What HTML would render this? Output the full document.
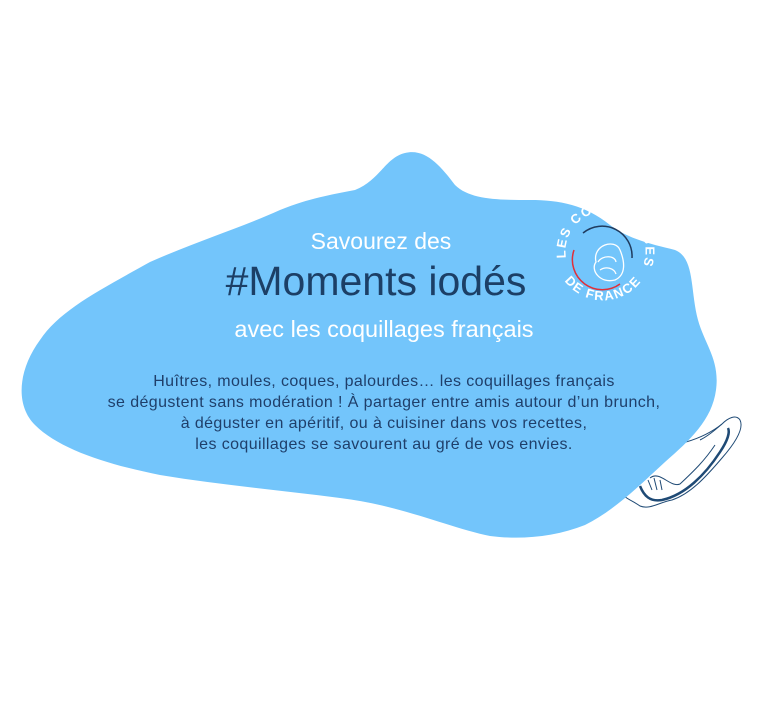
<!DOCTYPE html>
<html><head><meta charset="utf-8"><style>
html,body{margin:0;padding:0;background:#fff;width:768px;height:716px;overflow:hidden;font-family:"Liberation Sans",sans-serif}
.t{position:absolute;left:0;width:768px;text-align:center;white-space:nowrap}
</style></head><body>
<svg width="768" height="716" style="position:absolute;left:0;top:0">
<g fill="none" stroke="#1f4a75" stroke-width="1">
<path d="M618,488 C622,498 632,500 640,506 C650,510 660,502 672,500 C690,494 705,478 722,458 C736,442 744,428 740,420 C736,414 728,418 722,424 C712,432 700,438 686,442"/>
<path d="M640,486 C644,496 650,502 662,500 C685,495 705,475 720,452 C728,440 730,432 728,428" stroke-width="2.5"/>
<path d="M650,478 C660,470 670,488 680,484 C695,470 705,460 715,445"/>
<path d="M700,440 C708,436 715,430 722,424"/>
<path d="M648,480 l4,10 M654,478 l3,12 M660,480 l2,10"/>
</g>
<path fill="#73c5fb" d="M405,153 C425,148 440,165 455,185 C470,200 500,200 530,200 C560,200 585,205 610,225 C630,240 655,245 675,250 C695,258 690,290 698,320 C705,345 720,360 716,390 C712,420 690,440 665,462 C640,485 615,510 585,525 C555,537 520,540 490,536 C450,528 400,505 340,498 C280,490 220,485 160,475 C110,465 60,450 35,425 C15,405 18,370 40,340 C60,310 100,290 150,262 C200,240 240,228 280,210 C310,198 330,195 355,190 C380,180 385,158 405,153 Z"/>
<g fill="none" stroke-width="1.5">
<path d="M583,233 A30,30 0 0 1 632,258" stroke="#1f3b5e"/>
<path d="M574,250 A30,30 0 0 0 620,284" stroke="#e0303a"/>
</g>
<g fill="none" stroke="#fff" stroke-width="1.3">
<path d="M596,262 C592,245 615,238 620,250 C625,262 626,275 615,280 C600,284 590,270 596,262 Z"/>
<path d="M598,262 C602,255 615,255 616,262 M600,270 C606,266 614,268 616,274"/>
</g>
<g font-family="Liberation Sans,sans-serif" font-weight="bold" font-size="13" fill="#fff">
<path id="arc" d="M566,258 A40,40 0 1 1 641,270" fill="none"/>
<text><textPath href="#arc" startOffset="0" letter-spacing="1.5">LES COQUILLAGES</textPath></text>
<path id="arc2" d="M556,262 A48,48 0 0 0 650,262" fill="none"/>
<text text-anchor="middle"><textPath href="#arc2" startOffset="50%" letter-spacing="1.5">DE FRANCE</textPath></text>
</g>
</svg>
<div class="t" style="top:228px;font-size:23px;color:#fff;left:-3px">Savourez des</div>
<div class="t" style="top:258px;font-size:41px;color:#1c3f66;left:-8px">#Moments iodés</div>
<div class="t" style="top:316px;font-size:23.5px;color:#fff;left:0px">avec les coquillages français</div>
<div class="t" style="top:371px;font-size:16px;letter-spacing:0.4px;line-height:21px;color:#1f3f6a;left:0px">Huîtres, moules, coques, palourdes… les coquillages français<br>se dégustent sans modération ! À partager entre amis autour d’un brunch,<br>à déguster en apéritif, ou à cuisiner dans vos recettes,<br>les coquillages se savourent au gré de vos envies.</div>
</body></html>
